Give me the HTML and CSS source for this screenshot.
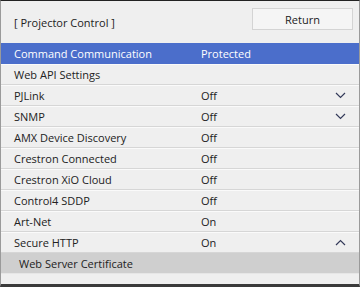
FILE: index.html
```html
<!DOCTYPE html>
<html>
<head>
    <meta charset="UTF-8">
    <title>Projector Control</title>
    <link rel="stylesheet" href="styles.css">
</head>
<body>
    <div class="screen">
        <div class="header">
            <span class="title">[ Projector Control ]</span>
            <div class="return-button">Return</div>
        </div>
        <ul class="menu">
            <li class="row selected"><span class="label">Command Communication</span><span class="value">Protected</span><span class="arrow"></span></li>
            <li class="row"><span class="label">Web API Settings</span><span class="value"></span><span class="arrow"></span></li>
            <li class="row"><span class="label">PJLink</span><span class="value">Off</span>
                <span class="arrow"><svg width="11" height="7" viewBox="0 0 11 7"><path d="M1 1 L5.5 5.5 L10 1" /></svg></span></li>
            <li class="row"><span class="label">SNMP</span><span class="value">Off</span>
                <span class="arrow"><svg width="11" height="7" viewBox="0 0 11 7"><path d="M1 1 L5.5 5.5 L10 1" /></svg></span></li>
            <li class="row"><span class="label">AMX Device Discovery</span><span class="value">Off</span><span class="arrow"></span></li>
            <li class="row"><span class="label">Crestron Connected</span><span class="value">Off</span><span class="arrow"></span></li>
            <li class="row"><span class="label">Crestron XiO Cloud</span><span class="value">Off</span><span class="arrow"></span></li>
            <li class="row"><span class="label">Control4 SDDP</span><span class="value">Off</span><span class="arrow"></span></li>
            <li class="row"><span class="label">Art-Net</span><span class="value">On</span><span class="arrow"></span></li>
            <li class="row"><span class="label">Secure HTTP</span><span class="value">On</span>
                <span class="arrow"><svg width="11" height="7" viewBox="0 0 11 7"><path d="M1 6 L5.5 1.5 L10 6" /></svg></span></li>
            <li class="row sub"><span class="label">Web Server Certificate</span></li>
        </ul>
    </div>
</body>
</html>
```

FILE: styles.css
```css
body {
    margin: 0;
    font-family: 'Open Sans', 'Noto Sans', sans-serif;
    font-size: 11px;
    color: #222;
}
.screen {
    width: 360px;
    height: 287px;
    box-sizing: border-box;
    background-color: #efefef;
    border-top: 1px solid #222;
    border-left: 1px solid #9a9a9a;
    border-right: 1px solid #9a9a9a;
    border-bottom: 3px solid #3a3a3a;
}
.header {
    height: 42px;
    display: flex;
    align-items: center;
    justify-content: space-between;
    padding: 0 6px 0 13px;
    box-sizing: border-box;
}
.title {
    margin-top: 1px;
}
.return-button {
    width: 101px;
    height: 22px;
    box-sizing: border-box;
    border: 1px solid #d4d4d4;
    background-color: #f5f5f5;
    display: flex;
    align-items: center;
    justify-content: center;
    margin-bottom: 6px;
}
.menu {
    list-style-type: none;
    margin: 0;
    padding: 0;
}
.row {
    height: 21px;
    box-sizing: border-box;
    display: grid;
    grid-template-columns: 187px 1fr 24px;
    align-items: center;
    padding-left: 13px;
    border-bottom: 1px solid #d6d6d6;
    border-top: 1px solid #fafafa;
}
.row.selected {
    background-color: #4b6ecb;
    color: white;
    border-color: #4b6ecb;
}
.row.sub {
    background-color: #cfcfcf;
    padding-left: 18px;
    border-top-color: #cfcfcf;
    border-bottom-color: #e6e6e6;
}
.arrow {
    display: flex;
    align-items: center;
}
.arrow svg {
    fill: none;
    stroke: #343a5a;
    stroke-width: 1.2;
}
```
